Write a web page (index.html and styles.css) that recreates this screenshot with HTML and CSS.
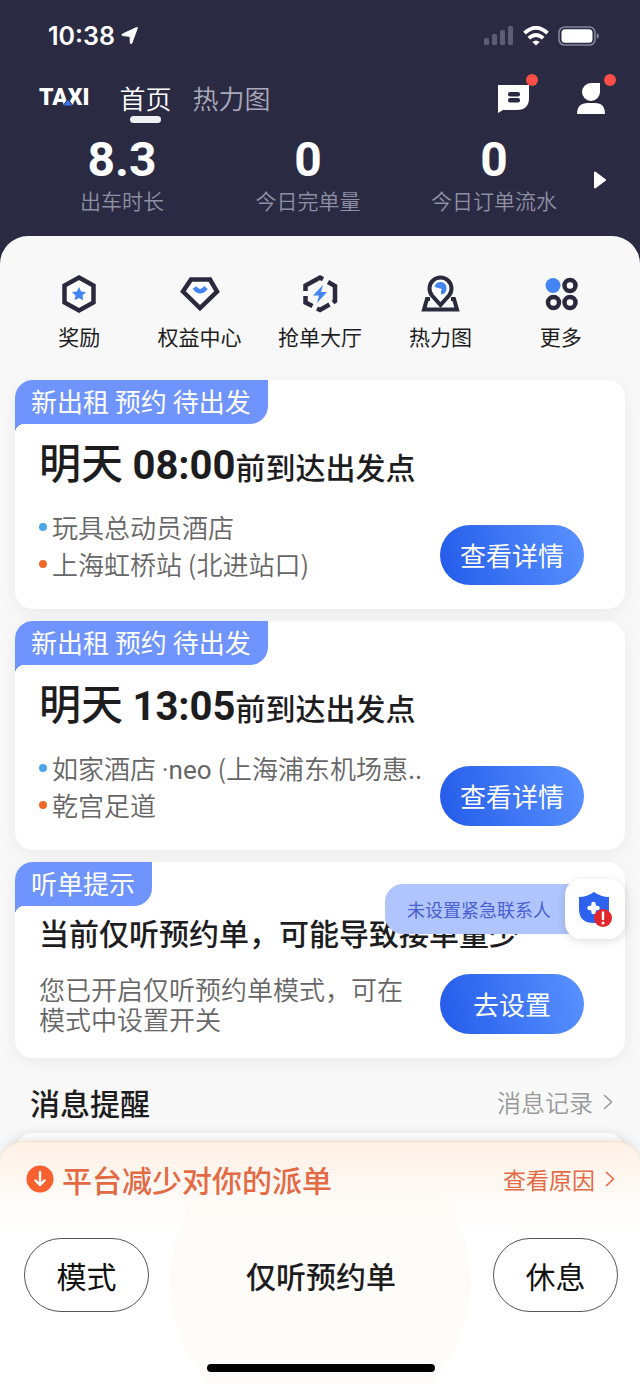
FILE: index.html
```
<!DOCTYPE html>
<html lang="zh-CN">

<head>
    <meta charset="UTF-8">
    <meta name="viewport" content="width=device-width, initial-scale=1.0">
    <title>首页</title>
    <link rel="stylesheet" href="styles.css">
</head>

<body>
    <header class="header">
        <div class="status-bar">
            <div class="status-time">
                <span>10:38</span>
                <svg width="18" height="18" viewBox="0 0 18 18"><path d="M16.300 1.200L10.800 16.200Q10 17.600 9.400 16.200L9 9.300L1.600 8.600Q0 8 1.500 7.100L15.500 .6Q16.800 .2 16.300 1.200Z" fill="#fff" stroke="#fff"/></svg>
            </div>
            <div class="status-icons">
                <svg width="30" height="20" viewBox="0 0 30 20" fill="#5d5d74"><rect x="0" y="12" width="5" height="7" rx="1.500"/><rect x="8" y="8" width="5" height="11" rx="1.500"/><rect x="16" y="4" width="5" height="15" rx="1.500"/><rect x="24" y="0" width="5" height="19" rx="1.500"/></svg>
                <svg width="26" height="20" viewBox="0 0 26 20" fill="none" stroke="#fff" stroke-width="3.800"><path d="M1.500 7.200Q13-3.600 24.500 7.200"/><path d="M5.800 12.200Q13 5.700 20.200 12.200"/><path d="M13 19.500L9.300 16Q13 12.800 16.700 16Z" fill="#fff" stroke="none"/></svg>
                <svg width="42" height="20" viewBox="0 0 42 20"><rect x="1" y="1" width="36" height="18" rx="5.500" fill="none" stroke="#85859a" stroke-width="1.600"/><rect x="3.500" y="3.300" width="31" height="13.400" rx="3.500" fill="#fff"/><path d="M38.800 7Q41 8 41 10T38.800 13Z" fill="#85859a"/></svg>
            </div>
        </div>

        <div class="nav-bar">
            <div class="logo">TAXI<svg class="logo-mark" width="12" height="9" viewBox="0 0 12 9"><path d="M6 1L11 8H1Z" fill="#3f74f0" stroke="#2a2a43"/></svg></div>
            <nav class="tabs">
                <a class="tab active" href="#">首页</a>
                <a class="tab" href="#">热力图</a>
            </nav>
            <div class="nav-tools">
                <button class="tool" type="button" aria-label="消息">
                    <svg width="32" height="32" viewBox="0 0 32 32"><path d="M0 3H31V16Q31 28 19 28H5L0 31Z" fill="#fff"/><rect x="10" y="10" width="12" height="4.500" rx="2" fill="#2a2a43"/><rect x="10" y="16" width="12" height="4.500" rx="2" fill="#2a2a43"/></svg>
                    <i class="dot-red"></i>
                </button>
                <button class="tool" type="button" aria-label="我的">
                    <svg width="32" height="32" viewBox="0 0 32 32" fill="#fff"><path d="M24 1V10A9 9 0 1 1 15 1ZM1 32Q1 21 12 21H19Q29 21 29 32Z"/></svg>
                    <i class="dot-red"></i>
                </button>
            </div>
        </div>

        <div class="stats">
            <div class="stat"><b>8.3</b><span>出车时长</span></div>
            <div class="stat"><b>0</b><span>今日完单量</span></div>
            <div class="stat"><b>0</b><span>今日订单流水</span></div>
            <button class="stats-more" type="button" aria-label="展开">
                <svg width="14" height="18" viewBox="0 0 14 18"><path d="M2 1.500L12 9L2 16.500Z" fill="#fff" stroke="#fff" stroke-width="2" stroke-linejoin="round"/></svg>
            </button>
        </div>
    </header>

    <main class="sheet">
        <nav class="actions">
            <a class="action" href="#">
                <svg width="40" height="40" viewBox="0 0 40 40"><path d="M20 3.500L34.500 11.500V28.500L20 36.500L5.500 28.500V11.500Z" fill="#fff" stroke="#2a2a3f" stroke-width="4.500"/><path d="M20 13L22.200 17.400L27 18L23.500 21.400L24.400 26.300L20 24L15.600 26.300L16.500 21.400L13 18L17.800 17.400Z" fill="#4385f5"/></svg>
                奖励
            </a>
            <a class="action" href="#">
                <svg width="40" height="40" viewBox="0 0 40 40"><path d="M11 5.500H30L37 17.500L20 34L3 17.500Z" fill="#fff" stroke="#2a2a3f" stroke-width="4.500"/><path d="M14.500 13.500Q20 21 26 13.500" fill="none" stroke="#4385f5" stroke-width="4.500"/></svg>
                权益中心
            </a>
            <a class="action" href="#">
                <svg width="40" height="40" viewBox="0 0 40 40"><g fill="none" stroke="#2a2a3f" stroke-width="4.500"><path d="M5.500 17V11.500L20 3.500L23 5.200"/><path d="M28 8L35 12V27L33 28.500"/><path d="M29.500 30.500L20 36L17 34.500"/><path d="M12.500 32L5.500 28.500V22"/></g><path d="M23 11L13 21.500H19L17 29L27 18H21Z" fill="#4385f5"/></svg>
                抢单大厅
            </a>
            <a class="action" href="#">
                <svg width="40" height="40" viewBox="0 0 40 40"><path d="M10 25H7L4 35.500H37L34 25H31" fill="none" stroke="#2a2a3f" stroke-width="4"/><path d="M20.500 31L12 21.500A11 11 0 1 1 29 21.500Z" fill="#fff" stroke="#2a2a3f" stroke-width="4"/><path d="M14.500 13Q15.500 8 21 8Q27 9 26.500 15Q26 20 21 20.500V17Q23 15 20 14.500Z" fill="#4385f5"/></svg>
                热力图
            </a>
            <a class="action" href="#">
                <svg width="40" height="40" viewBox="0 0 40 40"><circle cx="12" cy="11.500" r="7.500" fill="#4385f5"/><g fill="#fff" stroke="#2a2a3f" stroke-width="4.500"><circle cx="29" cy="11.500" r="5.500"/><circle cx="12.500" cy="28.500" r="5.500"/><circle cx="29" cy="28.500" r="5.500"/></g></svg>
                更多
            </a>
        </nav>

        <section class="card">
            <div class="card-tag">新出租 预约 待出发</div>
            <h2 class="trip-time"><b>明天 <span class="num">08:00</span></b><span>前到达出发点</span></h2>
            <div class="card-row">
                <ul class="route">
                    <li class="from">玩具总动员酒店</li>
                    <li class="to">上海虹桥站 (北进站口)</li>
                </ul>
                <button class="btn" type="button">查看详情</button>
            </div>
        </section>

        <section class="card">
            <div class="card-tag">新出租 预约 待出发</div>
            <h2 class="trip-time"><b>明天 <span class="num">13:05</span></b><span>前到达出发点</span></h2>
            <div class="card-row">
                <ul class="route">
                    <li class="from"><span>如家酒店 <span class="latin">·neo</span> (上海浦东机场惠..</span></li>
                    <li class="to">乾宫足道</li>
                </ul>
                <button class="btn" type="button">查看详情</button>
            </div>
        </section>

        <section class="card">
            <div class="card-tag">听单提示</div>
            <h2 class="tip-title">当前仅听预约单，可能导致接单量少</h2>
            <div class="card-row">
                <p class="tip-text">您已开启仅听预约单模式，可在模式中设置开关</p>
                <button class="btn" type="button">去设置</button>
            </div>
            <a class="safety" href="#">
                <span class="safety-text">未设置紧急联系人</span>
                <span class="safety-icon">
                    <svg width="34" height="36" viewBox="0 0 34 36"><path d="M16 1Q23 6 31 6V18Q31 32 16 32Q1 32 1 18V6Q9 6 16 1Z" fill="#2d62ee"/><path d="M15.500 13V21M11.500 17H19.500" stroke="#fff" stroke-width="4.500" stroke-linecap="round"/><circle cx="25" cy="27" r="9" fill="#e2252b"/><path d="M25 21.500V28" stroke="#fff" stroke-width="2.400" stroke-linecap="round"/><circle cx="25" cy="32" r="1.500" fill="#fff"/></svg>
                </span>
            </a>
        </section>

        <div class="section-head">
            <h2>消息提醒</h2>
            <a href="#">消息记录<svg width="10" height="16" viewBox="0 0 10 16"><path d="M1 1L8.500 8L1 15" fill="none" stroke="currentColor" stroke-width="1.600"/></svg></a>
        </div>
        <div class="message-card"></div>
    </main>

    <footer class="panel">
        <div class="notice">
            <svg width="28" height="28" viewBox="0 0 28 28"><circle cx="14" cy="14" r="13.500" fill="#f9602f"/><path d="M14 7V20M9.500 15.500L14 20L18.500 15.500" fill="none" stroke="#fff" stroke-width="2.400" stroke-linecap="round" stroke-linejoin="round"/></svg>
            <strong>平台减少对你的派单</strong>
            <a href="#">查看原因<svg width="10" height="16" viewBox="0 0 10 16"><path d="M1 1L8.500 8L1 15" fill="none" stroke="currentColor" stroke-width="1.600"/></svg></a>
        </div>
        <div class="controls">
            <button class="pill" type="button">模式</button>
            <strong>仅听预约单</strong>
            <button class="pill" type="button">休息</button>
        </div>
        <div class="home-bar"></div>
    </footer>
</body>

</html>
```
FILE: styles.css
```
* {
    box-sizing: border-box;
}
body {
    margin: 0;
    min-height: 100vh;
    display: flex;
    flex-direction: column;
    background-color: #2a2a43;
    color: #1d1d1f;
    font-family: "Noto Sans CJK SC", sans-serif;
}
h2,
p,
ul {
    margin: 0;
    padding: 0;
}
a {
    color: inherit;
    text-decoration: none;
}
button {
    padding: 0;
    border: 0;
    background: none;
    color: inherit;
    font-family: inherit;
}
svg {
    display: block;
    flex: none;
}

/* header */
.header {
    color: #fff;
}
.status-bar {
    height: 72px;
    padding: 0 40px 0 48px;
    display: flex;
    align-items: center;
    justify-content: space-between;
}
.status-time {
    display: flex;
    align-items: center;
    gap: 6px;
    font: 600 25px/30px Inter, sans-serif;
}
.status-icons {
    display: flex;
    align-items: center;
    gap: 9px;
}
.nav-bar {
    height: 52px;
    padding: 0 32px 0 39px;
    display: flex;
    align-items: center;
}
.logo {
    position: relative;
    font: 900 23px/24px Roboto, sans-serif;
}
.logo-mark {
    position: absolute;
    left: 23px;
    bottom: 3px;
}
.tabs {
    margin-left: 30px;
    display: flex;
    gap: 21px;
}
.tab {
    position: relative;
    font-size: 26px;
    font-weight: 350;
    line-height: 36px;
    color: #a9a9ba;
}
.tab.active {
    color: #fff;
}
.tab.active::after {
    content: "";
    position: absolute;
    left: 11px;
    right: 11px;
    bottom: -7px;
    height: 7px;
    border-radius: 4px;
    background-color: #f0f0f3;
}
.nav-tools {
    margin-left: auto;
    display: flex;
    gap: 46px;
}
.tool {
    position: relative;
}
.dot-red {
    position: absolute;
    top: -8px;
    right: -8px;
    width: 12px;
    height: 12px;
    border-radius: 50%;
    background-color: #fb4f47;
}
.stats {
    height: 112px;
    padding: 10px 28px 0 29px;
    display: flex;
}
.stat {
    flex: 1;
    display: flex;
    flex-direction: column;
    align-items: center;
}
.stat b {
    font: 700 48px/52px Roboto, sans-serif;
}
.stat span {
    font-size: 21px;
    font-weight: 350;
    line-height: 28px;
    color: #9090a4;
}
.stats-more {
    width: 25px;
    height: 92px;
    display: flex;
    align-items: center;
    justify-content: center;
}

/* white sheet */
.sheet {
    flex: 1;
    padding: 38px 15px 0;
    border-radius: 28px 28px 0 0;
    background-color: #f8f8f8;
}
.actions {
    margin: 0 4px 32px;
    display: grid;
    grid-template-columns: repeat(5, 1fr);
}
.action {
    display: flex;
    flex-direction: column;
    align-items: center;
    gap: 10px;
    font-size: 21px;
    line-height: 24px;
}
.card {
    position: relative;
    margin-bottom: 12px;
    padding: 0 41px 24px 24px;
    border-radius: 18px;
    background-color: #fff;
    box-shadow: 0 4px 16px rgba(0, 0, 0, 0.06);
}
.card-tag {
    position: relative;
    width: fit-content;
    height: 44px;
    margin-left: -24px;
    padding: 0 17px 0 16px;
    border-radius: 18px 0 18px 0;
    background-color: #7094fd;
    color: #fff;
    font-size: 26px;
    line-height: 42px;
}
.card-tag::after {
    content: "";
    position: absolute;
    top: 100%;
    left: 0;
    width: 9px;
    height: 9px;
    background: radial-gradient(circle at 100% 100%, #fff 9px, #7094fd 9px);
}
.trip-time {
    height: 50px;
    margin: 12px 0 22px;
    display: flex;
    align-items: baseline;
    font-size: 30px;
    font-weight: 500;
    line-height: 50px;
    white-space: nowrap;
}
.trip-time b {
    font-size: 42px;
    font-weight: 500;
}
.num {
    font-family: Roboto, sans-serif;
    font-size: 40px;
    font-weight: 700;
}
.card-row {
    display: flex;
    align-items: flex-end;
    justify-content: space-between;
}
.route {
    width: 0;
    flex: 1;
    padding-bottom: 3px;
    list-style: none;
    color: #666;
    font-size: 26px;
    font-weight: 350;
    line-height: 37px;
    white-space: nowrap;
}
.route li {
    height: 37px;
    display: flex;
    align-items: center;
    gap: 5px;
}
.route li::before {
    content: "";
    flex: none;
    width: 8px;
    height: 8px;
    border-radius: 50%;
    background-color: #4aa8e8;
}
.route .to::before {
    background-color: #ee6a2c;
}
.latin {
    font-family: Roboto, sans-serif;
    font-weight: 400;
    line-height: 1;
}
.btn {
    flex: none;
    width: 144px;
    height: 60px;
    border-radius: 30px;
    background: linear-gradient(75deg, #235bea, #5a92ff);
    color: #fff;
    font-size: 26px;
    line-height: 36px;
}
.tip-title {
    margin: 6px 0 22px;
    font-size: 30px;
    font-weight: 500;
    line-height: 40px;
    white-space: nowrap;
}
.tip-text {
    margin-right: 24px;
    color: #666;
    font-size: 26px;
    font-weight: 350;
    line-height: 30px;
}

/* floating reminder over the tip card */
.safety {
    position: absolute;
    top: 17px;
    right: 0;
    display: flex;
    align-items: center;
}
.safety-text {
    height: 50px;
    margin-right: -12px;
    padding: 0 26px 0 22px;
    border-radius: 18px 0 0 18px;
    background-color: #b0c5fd;
    color: #4a5fd0;
    font-size: 18px;
    line-height: 50px;
}
.safety-icon {
    position: relative;
    width: 60px;
    height: 60px;
    display: flex;
    align-items: center;
    justify-content: center;
    border-radius: 16px;
    background-color: #fff;
    box-shadow: 0 2px 10px rgba(0, 0, 0, 0.14);
}
.section-head {
    margin: 24px 12px 11px 15px;
    display: flex;
    align-items: center;
    justify-content: space-between;
    line-height: 40px;
}
.section-head h2 {
    font-size: 30px;
    font-weight: 500;
}
.section-head a,
.notice a {
    display: flex;
    align-items: center;
    gap: 10px;
}
.section-head a {
    color: #999;
    font-size: 24px;
    font-weight: 350;
}
.message-card {
    height: 30px;
    border-radius: 18px 18px 0 0;
    background-color: #fff;
    box-shadow: 0 0 12px rgba(0, 0, 0, 0.08);
}

/* bottom panel */
.panel {
    position: relative;
    margin-top: -23px;
    padding: 15px 22px 12px 24px;
    border-top: 1px solid #f8dfc8;
    border-radius: 24px 24px 0 0;
    background: linear-gradient(#fff0e6, rgba(255, 250, 246, 0.7) 60px, rgba(255, 255, 255, 0) 90px),
        radial-gradient(circle at 50% 140px, #fdfcf8 150px, #fff 151px);
    box-shadow: 0 -2px 12px rgba(0, 0, 0, 0.1);
}
.notice {
    display: flex;
    align-items: center;
    margin: 0 3px 37px 2px;
    line-height: 44px;
    color: #e46a45;
}
.notice strong {
    margin-left: 8px;
    font-size: 30px;
    font-weight: 500;
}
.notice a {
    margin-left: auto;
    font-size: 23px;
}
.controls {
    display: flex;
    align-items: center;
    justify-content: space-between;
}
.controls strong {
    font-size: 30px;
    font-weight: 500;
}
.pill {
    width: 125px;
    height: 74px;
    border: 1px solid #555;
    border-radius: 37px;
    background-color: #fff;
    color: #111;
    font-size: 30px;
}
.home-bar {
    width: 228px;
    height: 8px;
    margin: 52px auto 0;
    border-radius: 4px;
    background-color: #000;
}
```
